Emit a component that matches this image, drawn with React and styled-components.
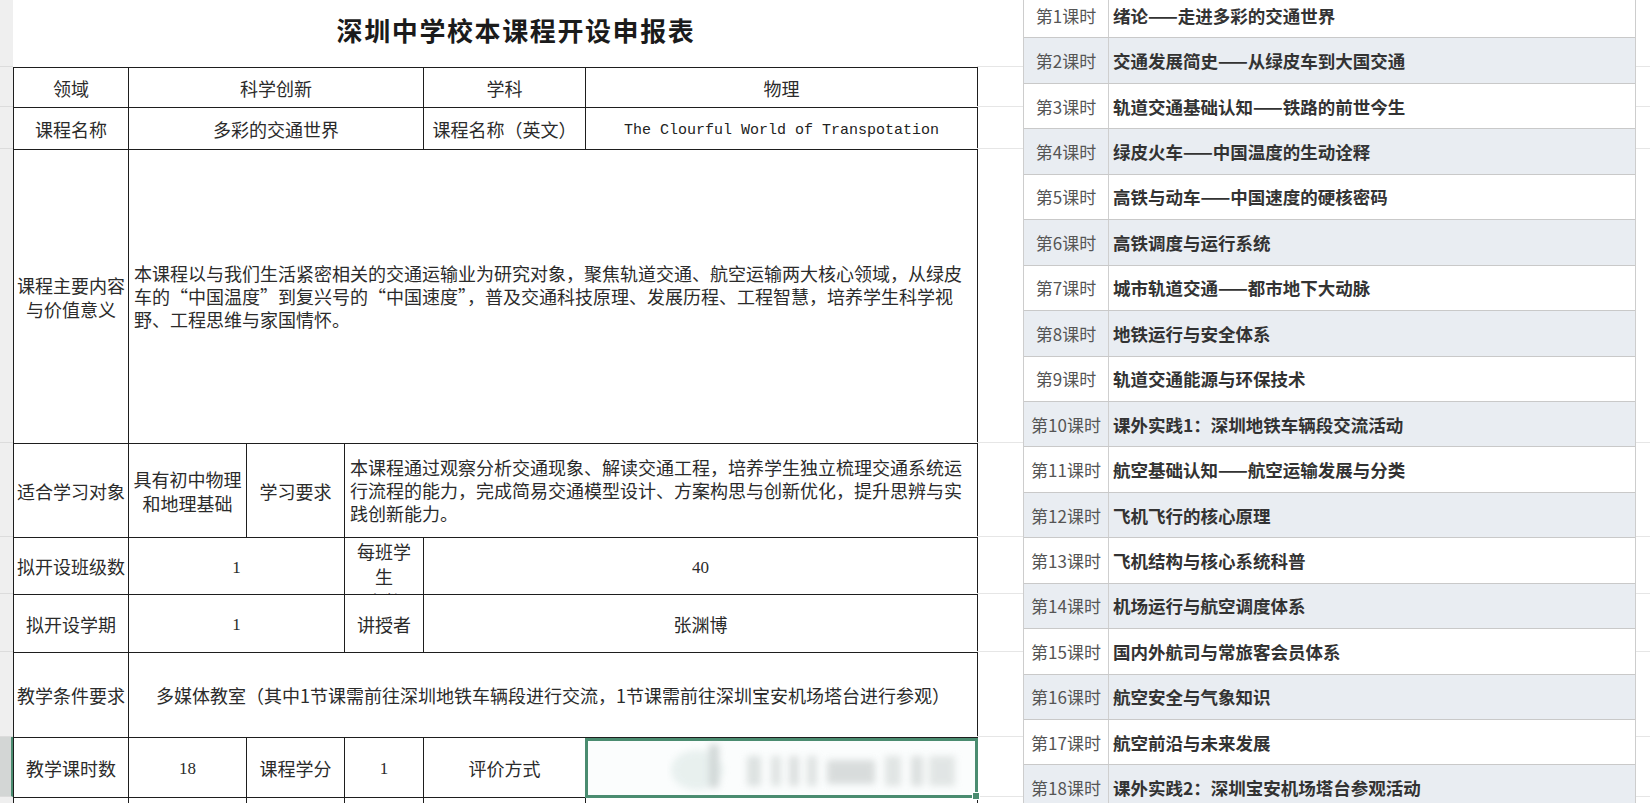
import React from 'react'
import styled, { createGlobalStyle } from 'styled-components'

const GlobalStyle = createGlobalStyle`
  html, body { margin: 0; padding: 0; background: #ffffff; }
  body { font-family: "Noto Sans CJK SC", "Liberation Sans", sans-serif; color: #222; }
`

// row boundaries of the sheet (title row + form rows), reused by the side columns
const sheetRows = [67, 40, 42, 294, 94, 57, 58, 85, 60, 40]

const lessons = [
  '绪论——走进多彩的交通世界',
  '交通发展简史——从绿皮车到大国交通',
  '轨道交通基础认知——铁路的前世今生',
  '绿皮火车——中国温度的生动诠释',
  '高铁与动车——中国速度的硬核密码',
  '高铁调度与运行系统',
  '城市轨道交通——都市地下大动脉',
  '地铁运行与安全体系',
  '轨道交通能源与环保技术',
  '课外实践1：深圳地铁车辆段交流活动',
  '航空基础认知——航空运输发展与分类',
  '飞机飞行的核心原理',
  '飞机结构与核心系统科普',
  '机场运行与航空调度体系',
  '国内外航司与常旅客会员体系',
  '航空安全与气象知识',
  '航空前沿与未来发展',
  '课外实践2：深圳宝安机场塔台参观活动',
]

function Watermark() {
  return (
    <svg width="300" height="56" viewBox="0 0 300 56">
      <defs>
        <filter id="wm-blur" x="-20%" y="-40%" width="140%" height="180%">
          <feGaussianBlur stdDeviation="3.6" />
        </filter>
      </defs>
      <g filter="url(#wm-blur)" opacity="0.75">
        <ellipse cx="30" cy="30" rx="26" ry="20" fill="#e2ecea" />
        <rect x="42" y="4" width="10" height="44" rx="4" fill="#c3cbca" />
        <rect x="80" y="16" width="14" height="30" fill="#d3d9d8" />
        <rect x="104" y="16" width="10" height="30" fill="#d6dbda" />
        <rect x="122" y="16" width="10" height="30" fill="#d1d6d5" />
        <rect x="140" y="16" width="10" height="30" fill="#d5dad9" />
        <rect x="160" y="20" width="48" height="24" fill="#cdd2d1" />
        <rect x="218" y="16" width="16" height="30" fill="#d8dddc" />
        <rect x="244" y="16" width="12" height="30" fill="#d2d7d6" />
        <rect x="262" y="16" width="26" height="30" fill="#d9dedd" />
      </g>
    </svg>
  )
}

function App() {
  return (
    <Page>
      <GlobalStyle />
      <RowHeaders>
        {sheetRows.map((h, i) => (
          <HeaderCell key={i} $h={h} $active={i === 8} />
        ))}
      </RowHeaders>

      <FormArea>
        <Title>深圳中学校本课程开设申报表</Title>
        <Form>
          <colgroup>
            <col style={{ width: 115 }} />
            <col style={{ width: 118 }} />
            <col style={{ width: 98 }} />
            <col style={{ width: 79 }} />
            <col style={{ width: 162 }} />
            <col style={{ width: 392 }} />
          </colgroup>
          <tbody>
            <Row $h={40}>
              <Cell>领域</Cell>
              <Cell colSpan={3}>科学创新</Cell>
              <Cell>学科</Cell>
              <Cell>物理</Cell>
            </Row>
            <Row $h={42}>
              <Cell>课程名称</Cell>
              <Cell colSpan={3}>多彩的交通世界</Cell>
              <Cell>课程名称（英文）</Cell>
              <Cell><English>The Clourful World of Transpotation</English></Cell>
            </Row>
            <Row $h={294}>
              <Cell>课程主要内容<br />与价值意义</Cell>
              <Para colSpan={5}>
                本课程以与我们生活紧密相关的交通运输业为研究对象，聚焦轨道交通、航空运输两大核心领域，从绿皮车的“中国温度”到复兴号的“中国速度”，普及交通科技原理、发展历程、工程智慧，培养学生科学视野、工程思维与家国情怀。
              </Para>
            </Row>
            <Row $h={94}>
              <Cell>适合学习对象</Cell>
              <Cell>具有初中物理<br />和地理基础</Cell>
              <Cell>学习要求</Cell>
              <Para colSpan={3}>
                本课程通过观察分析交通现象、解读交通工程，培养学生独立梳理交通系统运行流程的能力，完成简易交通模型设计、方案构思与创新优化，提升思辨与实践创新能力。
              </Para>
            </Row>
            <Row $h={57}>
              <Cell>拟开设班级数</Cell>
              <Cell colSpan={2}><Num>1</Num></Cell>
              <Cell $top>
                <Clipped>每班学<br />生<br />人数</Clipped>
              </Cell>
              <Cell colSpan={2}><Num>40</Num></Cell>
            </Row>
            <Row $h={58}>
              <Cell>拟开设学期</Cell>
              <Cell colSpan={2}><Num>1</Num></Cell>
              <Cell>讲授者</Cell>
              <Cell colSpan={2}>张渊博</Cell>
            </Row>
            <Row $h={85}>
              <Cell>教学条件要求</Cell>
              <Cell colSpan={5}>多媒体教室（其中1节课需前往深圳地铁车辆段进行交流，1节课需前往深圳宝安机场塔台进行参观）</Cell>
            </Row>
            <Row $h={60}>
              <Cell>教学课时数</Cell>
              <Cell><Num>18</Num></Cell>
              <Cell>课程学分</Cell>
              <Cell><Num>1</Num></Cell>
              <Cell>评价方式</Cell>
              <Selected>
                <SelectBox>
                  <Watermark />
                  <Handle />
                </SelectBox>
              </Selected>
            </Row>
            <Row $h={40}>
              <Cell />
              <Cell />
              <Cell />
              <Cell />
              <Cell />
              <Cell />
            </Row>
          </tbody>
        </Form>
      </FormArea>

      <Filler $w={46}>
        {sheetRows.map((h, i) => (
          <FillerCell key={i} $h={h} />
        ))}
      </Filler>

      <LessonList>
        {lessons.map((name, i) => (
          <LessonRow key={i} $alt={i % 2 === 1}>
            <LessonNo>第{i + 1}课时</LessonNo>
            <LessonName>{name}</LessonName>
          </LessonRow>
        ))}
      </LessonList>

      <Filler $grow>
        {sheetRows.map((h, i) => (
          <FillerCell key={i} $h={h} />
        ))}
      </Filler>
    </Page>
  )
}

const Page = styled.div`
  display: flex;
  align-items: flex-start;
  width: 1650px;
  height: 803px;
  overflow: hidden;
  background: #fff;
`

const RowHeaders = styled.div`
  flex: none;
  width: 13px;
  display: flex;
  flex-direction: column;
  background: #efefef;
`

const HeaderCell = styled.div`
  height: ${p => p.$h}px;
  box-sizing: border-box;
  border-bottom: 1px solid #dcdcdc;
  background: ${p => (p.$active ? '#d3d6d5' : 'transparent')};
  border-right: ${p => (p.$active ? '2px solid #4a8c70' : '0')};
`

const FormArea = styled.div`
  flex: none;
  width: 964px;
  display: flex;
  flex-direction: column;
`

const Title = styled.h1`
  margin: 0;
  height: 67px;
  box-sizing: border-box;
  padding: 0 0 8px 42px;
  display: flex;
  align-items: center;
  justify-content: center;
  font-family: "Noto Sans CJK SC", sans-serif;
  font-size: 26px;
  font-weight: 700;
  letter-spacing: 1.6px;
  color: #1b1b1b;
`

const Form = styled.table`
  width: 964px;
  table-layout: fixed;
  border-collapse: collapse;
  font-family: "Noto Sans CJK SC", "Liberation Serif", serif;
  font-size: 18px;
  color: #2b2b2b;
`

const Row = styled.tr`
  height: ${p => p.$h}px;
`

const Cell = styled.td`
  border: 1px solid #1e1e1e;
  padding: ${p => (p.$top ? '1px 0 0' : '0')};
  text-align: center;
  vertical-align: ${p => (p.$top ? 'top' : 'middle')};
  line-height: 24px;
  overflow: hidden;
`

const Para = styled.td`
  border: 1px solid #1e1e1e;
  padding: 0 5px;
  text-align: left;
  vertical-align: middle;
  line-height: 23px;
`

const English = styled.span`
  font-family: "Liberation Mono", monospace;
  font-size: 15px;
  color: #222;
`

const Num = styled.span`
  font-family: "Liberation Serif", serif;
  font-size: 17px;
`

const Clipped = styled.div`
  height: 55px;
  overflow: hidden;
  line-height: 25px;
`

const Selected = styled.td`
  border: 1px solid #1e1e1e;
  padding: 0;
`

const SelectBox = styled.div`
  position: relative;
  height: 60px;
  margin: -1px;
  box-sizing: border-box;
  border: 3px solid #4a8c70;
  display: flex;
  align-items: center;
  justify-content: flex-end;
  padding-right: 8px;
  background: #fbfdfd;
`

const Handle = styled.span`
  position: absolute;
  right: -5px;
  bottom: -5px;
  width: 6px;
  height: 6px;
  background: #4a8c70;
  border: 1px solid #fff;
`

const Filler = styled.div`
  flex: ${p => (p.$grow ? '1' : 'none')};
  width: ${p => (p.$w ? `${p.$w}px` : 'auto')};
  display: flex;
  flex-direction: column;
`

const FillerCell = styled.div`
  height: ${p => p.$h}px;
  box-sizing: border-box;
  border-bottom: 1px solid #e6e6e6;
`

const LessonList = styled.div`
  flex: none;
  width: 613px;
  margin-top: -7px;
  box-sizing: border-box;
  border-left: 1px solid #cdcdcd;
  border-right: 1px solid #cdcdcd;
  display: flex;
  flex-direction: column;
`

const LessonRow = styled.div`
  height: 45.45px;
  box-sizing: border-box;
  display: grid;
  grid-template-columns: 85px 1fr;
  border-bottom: 1px solid #c9c9c9;
  background: ${p => (p.$alt ? '#e9edf2' : '#ffffff')};
`

const LessonNo = styled.div`
  display: flex;
  align-items: center;
  justify-content: center;
  border-right: 1px solid #cfcfcf;
  font-size: 17px;
  color: #555;
  white-space: nowrap;
`

const LessonName = styled.div`
  display: flex;
  align-items: center;
  padding-left: 4px;
  font-size: 17.5px;
  font-weight: 700;
  color: #333;
  white-space: nowrap;
`

export default App
